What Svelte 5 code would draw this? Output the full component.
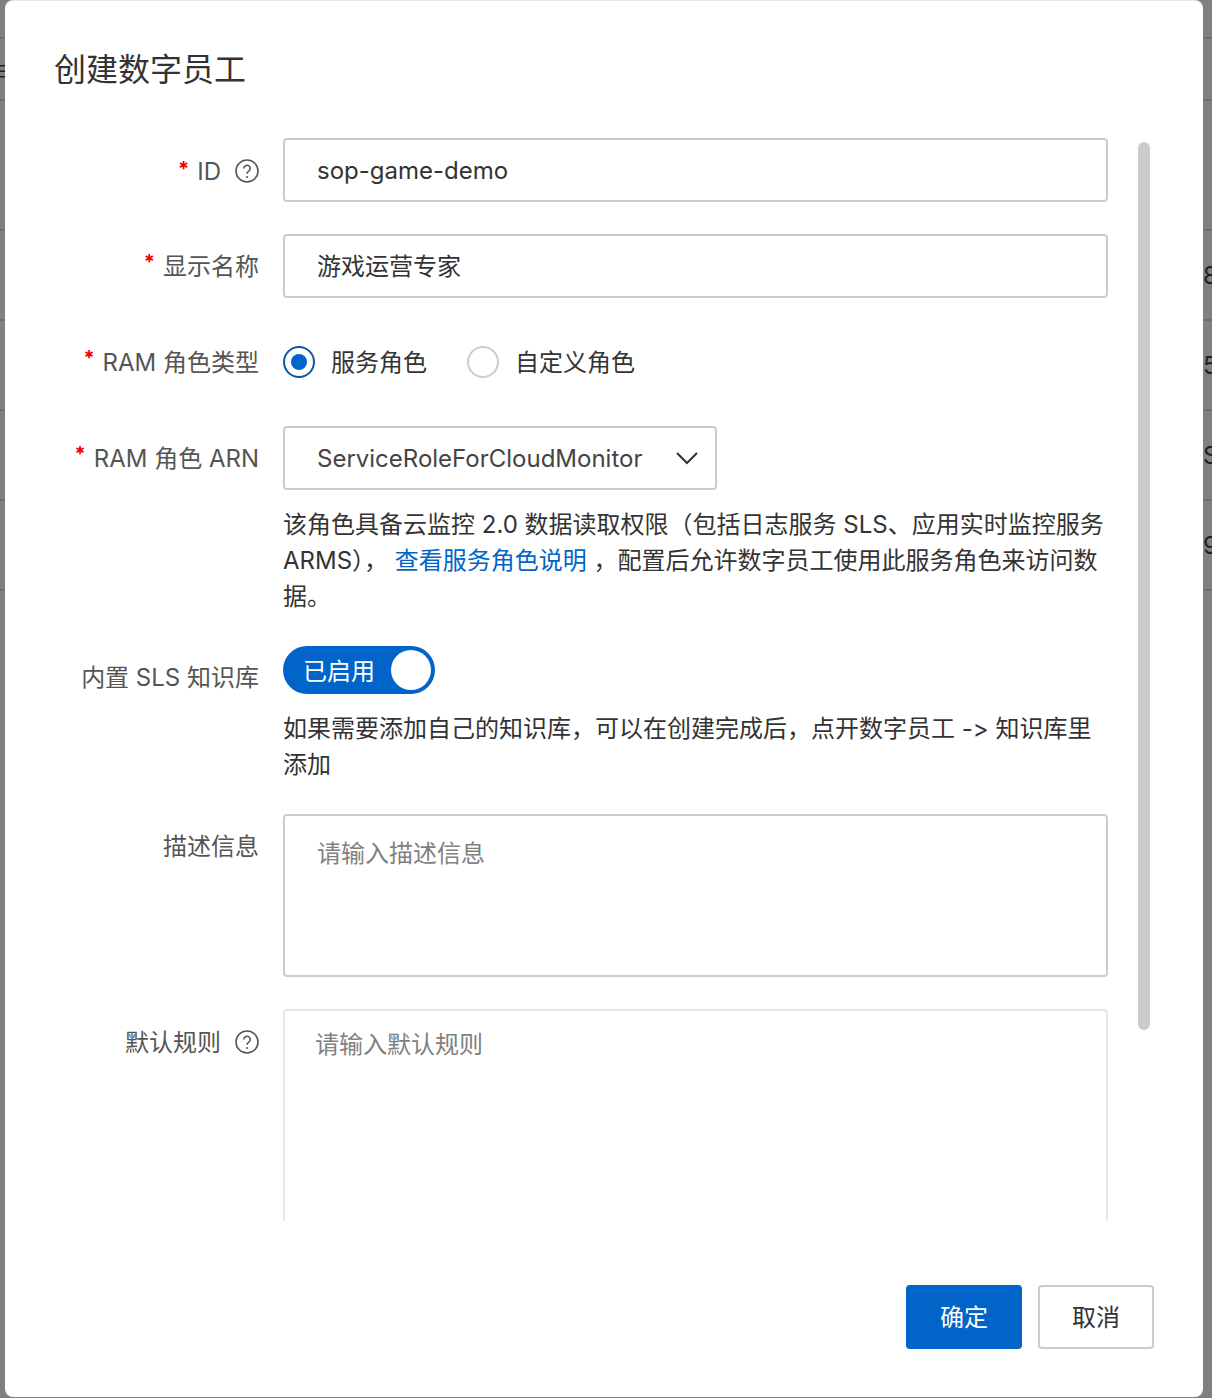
<script>
  // left and right slivers of the page behind the dialog
  const pageRows = [
    { h: 39, left: '', cut: '' },
    { h: 62, left: '≡', cut: '' },
    { h: 130, left: '', cut: '' },
    { h: 90, left: '', cut: '8' },
    { h: 90, left: '', cut: '5' },
    { h: 90, left: '', cut: 'S:' },
    { h: 90, left: '', cut: '9' }
  ];
</script>

<div class="page">
  <div class="behind">
    {#each pageRows as row}
      <div class="behind-row" style="height: {row.h}px"><em>{row.left}</em><span>{row.cut}</span></div>
    {/each}
  </div>

  <div class="overlay">
    <div class="dialog">
      <h2 class="title">创建数字员工</h2>

      <div class="body">
        <div class="scrollbar"></div>
        <form class="form">
          <div class="row">
            <div class="label label-id"><i>*</i>ID<svg class="help" viewBox="0 0 24 24"><circle cx="12" cy="12" r="11" /><path d="M8.8 9.4a3.2 3.2 0 1 1 5 2.7c-1.1.7-1.8 1.3-1.8 2.7" /><circle class="dot" cx="12" cy="18" r="1" /></svg></div>
            <div class="control"><div class="input">sop-game-demo</div></div>
          </div>

          <div class="row">
            <div class="label"><i>*</i>显示名称</div>
            <div class="control"><div class="input">游戏运营专家</div></div>
          </div>

          <div class="row row-radio">
            <div class="label"><i>*</i>RAM 角色类型</div>
            <div class="control radios">
              <span class="radio on"></span><span class="radio-text">服务角色</span>
              <span class="radio"></span><span class="radio-text">自定义角色</span>
            </div>
          </div>

          <div class="row">
            <div class="label"><i>*</i>RAM 角色 ARN</div>
            <div class="control">
              <div class="input select">
                ServiceRoleForCloudMonitor
                <svg class="caret" viewBox="0 0 24 14"><path d="M2 2l10 10L22 2" /></svg>
              </div>
              <p class="hint">该角色具备云监控 2.0 数据读取权限（包括日志服务 SLS、应用实时监控服务 ARMS）， <a href="#top">查看服务角色说明</a> ，配置后允许数字员工使用此服务角色来访问数据。</p>
            </div>
          </div>

          <div class="row row-switch">
            <div class="label label-switch">内置 SLS 知识库</div>
            <div class="control">
              <div class="switch"><span>已启用</span><b></b></div>
              <p class="hint">如果需要添加自己的知识库，可以在创建完成后，点开数字员工 -&gt; 知识库里添加</p>
            </div>
          </div>

          <div class="row">
            <div class="label">描述信息</div>
            <div class="control"><div class="textarea">请输入描述信息</div></div>
          </div>

          <div class="row">
            <div class="label label-rules">默认规则<svg class="help" viewBox="0 0 24 24"><circle cx="12" cy="12" r="11" /><path d="M8.8 9.4a3.2 3.2 0 1 1 5 2.7c-1.1.7-1.8 1.3-1.8 2.7" /><circle class="dot" cx="12" cy="18" r="1" /></svg></div>
            <div class="control"><div class="textarea rules">请输入默认规则</div></div>
          </div>
        </form>
      </div>

      <div class="footer">
        <button type="button" class="btn primary">确定</button>
        <button type="button" class="btn">取消</button>
      </div>
    </div>
  </div>
</div>

<style>
  :global(body) {
    margin: 0;
  }

  .page {
    position: relative;
    width: 1212px;
    height: 1398px;
    overflow: hidden;
    background: #808080;
    font-family: Inter, "Noto Sans CJK SC", sans-serif;
    font-size: 24px;
    font-variant-ligatures: none;
    font-feature-settings: "calt" 0;
    color: #333;
  }

  .behind-row {
    box-sizing: border-box;
    display: flex;
    justify-content: space-between;
    align-items: center;
    border-bottom: 2px solid #6f6f6f;
    color: #1f1f1f;
  }
  .behind-row span {
    width: 9px;
    overflow: hidden;
    white-space: nowrap;
  }
  .behind-row em {
    font-style: normal;
    margin-left: -10px;
  }

  .overlay {
    position: absolute;
    inset: 0;
    padding: 0 9px 1px 5px;
    display: flex;
  }

  .dialog {
    flex: 1;
    min-width: 0;
    display: flex;
    flex-direction: column;
    background: #fff;
    border-radius: 8px;
    border-top: 1px solid #e6e6e6;
    box-sizing: border-box;
  }

  .title {
    margin: 0;
    padding: 49px 49px 0;
    height: 89px;
    box-sizing: border-box;
    font-size: 32px;
    line-height: 40px;
    font-weight: 400;
    color: #333;
  }

  .body {
    position: relative;
    height: 1131px;
    overflow: hidden;
    padding-top: 48px;
    box-sizing: border-box;
  }

  .scrollbar {
    position: absolute;
    left: 1133px;
    top: 52px;
    width: 12px;
    height: 888px;
    border-radius: 6px;
    background: #ccc;
  }

  .form {
    display: flex;
    flex-direction: column;
    gap: 32px;
    padding-right: 95px;
  }

  .row {
    display: flex;
    align-items: flex-start;
  }
  .row-radio {
    margin: 16px 0;
  }
  .row-switch {
    margin: -1px 0 -1px;
  }

  .label {
    flex: 0 0 254px;
    box-sizing: border-box;
    display: flex;
    justify-content: flex-end;
    align-items: center;
    height: 64px;
    padding-bottom: 4px;
    color: #555;
    white-space: nowrap;
  }
  .row-radio .label {
    height: 32px;
  }
  .label i {
    color: #e00;
    font-style: normal;
    font-weight: 700;
    font-size: 20px;
    margin-right: 8px;
    position: relative;
    top: -2px;
  }
  .label-id {
    padding: 2px 0 0;
  }
  .label-switch {
    height: 62px;
  }
  .label-rules {
    padding-bottom: 2px;
  }
  .label-rules .help {
    margin-top: 4px;
  }

  .help {
    width: 24px;
    height: 24px;
    margin-left: 14px;
    fill: none;
    stroke: #555;
    stroke-width: 1.6;
  }
  .help .dot {
    fill: #555;
    stroke: none;
  }

  .control {
    flex: 1;
    min-width: 0;
    margin-left: 24px;
  }

  .input,
  .textarea {
    box-sizing: border-box;
    height: 64px;
    line-height: 62px;
    padding: 0 32px;
    border: 2px solid #ccc;
    border-radius: 4px;
    color: #333;
  }
  .select {
    position: relative;
    width: 434px;
    color: #444;
    white-space: nowrap;
  }
  .caret {
    position: absolute;
    right: 16px;
    top: 23px;
    width: 24px;
    height: 14px;
    fill: none;
    stroke: #333;
    stroke-width: 2;
  }

  .textarea {
    height: 163px;
    line-height: 36px;
    padding-top: 20px;
    color: #808080;
  }
  .rules {
    height: 260px;
    border-color: #e6e6e6;
    border-bottom: 0;
    padding: 16px 30px;
    border-radius: 4px 4px 0 0;
  }

  .radios {
    display: flex;
    align-items: center;
    height: 32px;
  }
  .radio {
    box-sizing: border-box;
    width: 32px;
    height: 32px;
    border-radius: 50%;
    border: 2px solid #ccc;
    display: flex;
    align-items: center;
    justify-content: center;
  }
  .radio.on {
    border-color: #0b57a4;
  }
  .radio.on::after {
    content: "";
    width: 16px;
    height: 16px;
    border-radius: 50%;
    background: #0064c8;
  }
  .radio-text {
    margin: -4px 40px 0 16px;
  }

  .hint {
    margin: 17px 0 0;
    line-height: 36px;
    color: #333;
  }
  .hint a {
    color: #0064c8;
    text-decoration: none;
  }

  .switch {
    box-sizing: border-box;
    width: 152px;
    height: 48px;
    border-radius: 24px;
    background: #0064c8;
    display: flex;
    align-items: center;
    justify-content: space-between;
    padding: 0 4px 0 20px;
    color: #fff;
  }
  .switch span {
    margin-top: -2px;
  }
  .switch b {
    width: 40px;
    height: 40px;
    border-radius: 50%;
    background: #fff;
  }

  .footer {
    flex: 1;
    display: flex;
    justify-content: flex-end;
    align-items: flex-start;
    gap: 16px;
    padding: 64px 49px 0 0;
  }

  .btn {
    box-sizing: border-box;
    width: 116px;
    height: 64px;
    padding: 0 0 4px;
    border: 2px solid #ccc;
    border-radius: 4px;
    background: #fff;
    color: #333;
    font: inherit;
  }
  .primary {
    background: #0064c8;
    border-color: #0064c8;
    color: #fff;
  }
</style>
